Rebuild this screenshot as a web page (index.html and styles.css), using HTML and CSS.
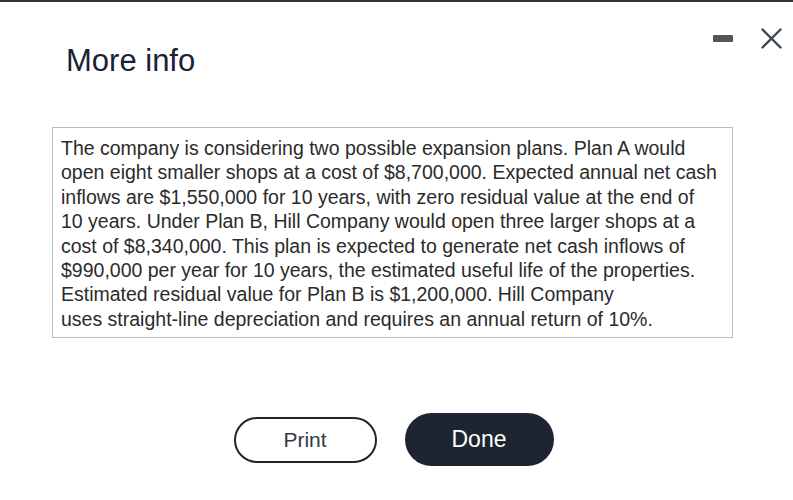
FILE: index.html
```html
<!DOCTYPE html>
<html>
<head>
<meta charset="utf-8">
<link rel="stylesheet" href="styles.css">
</head>
<body>
<div class="dialog">
  <div class="header">
    <h1 class="title">More info</h1>
    <div class="controls">
      <span class="minimize"></span>
      <svg class="close" width="21" height="21" viewBox="0 0 21 21"><path d="M1.5 1.5 L19.5 19.5 M19.5 1.5 L1.5 19.5" stroke="#3c4654" stroke-width="2.4" stroke-linecap="round" fill="none"/></svg>
    </div>
  </div>
  <div class="info-box">
    <p class="info-text">The company is considering two possible expansion plans. Plan A would<br>open eight smaller shops at a cost of $8,700,000. Expected annual net cash<br>inflows are $1,550,000 for 10 years, with zero residual value at the end of<br>10 years. Under Plan B, Hill Company would open three larger shops at a<br>cost of $8,340,000. This plan is expected to generate net cash inflows of<br>$990,000 per year for 10 years, the estimated useful life of the properties.<br>Estimated residual value for Plan B is $1,200,000. Hill Company<br>uses straight-line depreciation and requires an annual return of 10%.</p>
  </div>
  <div class="actions">
    <button class="btn btn-print">Print</button>
    <button class="btn btn-done">Done</button>
  </div>
</div>
</body>
</html>
```
FILE: styles.css
```css
html, body {
  margin: 0;
  padding: 0;
  background: #ffffff;
}
body {
  width: 793px;
  height: 500px;
  overflow: hidden;
  font-family: "Liberation Sans", Arial, sans-serif;
}
.dialog {
  border-top: 2px solid #333333;
  height: 498px;
  box-sizing: border-box;
}
.header {
  display: flex;
  justify-content: space-between;
  align-items: flex-start;
  padding: 0 11px 0 66px;
}
.title {
  margin: 0;
  padding-top: 41px;
  font-size: 31px;
  line-height: 36px;
  font-weight: normal;
  color: #1a2236;
}
.controls {
  display: flex;
  align-items: center;
  gap: 28px;
  padding-top: 26px;
}
.minimize {
  display: block;
  width: 20px;
  height: 7px;
  background: #555555;
  border-radius: 1px;
}
.close {
  display: block;
}
.info-box {
  margin: 48px 0 0 52px;
  width: 681px;
  height: 211px;
  box-sizing: border-box;
  border: 1px solid #bdbdbd;
  padding: 8px 8px;
}
.info-text {
  margin: 0;
  font-size: 19.5px;
  line-height: 24.4px;
  color: #2b2b2b;
  white-space: nowrap;
}
.actions {
  display: flex;
  justify-content: center;
  align-items: center;
  gap: 28px;
  margin-top: 75px;
  padding-right: 6px;
}
.btn {
  font-family: "Liberation Sans", Arial, sans-serif;
  border-radius: 30px;
  box-sizing: border-box;
  cursor: pointer;
}
.btn-print {
  width: 143px;
  height: 46px;
  background: #ffffff;
  border: 2px solid #1e2430;
  color: #333a44;
  font-size: 21px;
}
.btn-done {
  width: 149px;
  height: 53px;
  background: #1e2430;
  border: none;
  color: #ffffff;
  font-size: 23px;
}
```
